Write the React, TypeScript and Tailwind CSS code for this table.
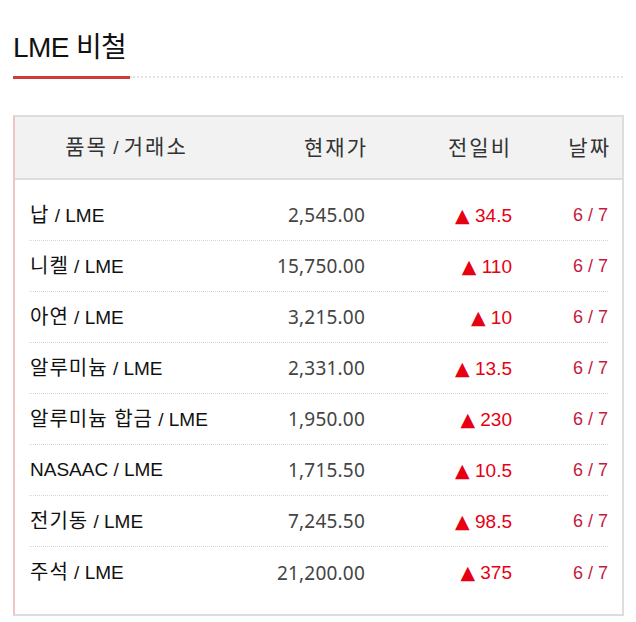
const rows = [
  { ko: "납", rest: " / LME", price: "2,545.00", diff: "34.5", date: "6 / 7" },
  { ko: "니켈", rest: " / LME", price: "15,750.00", diff: "110", date: "6 / 7" },
  { ko: "아연", rest: " / LME", price: "3,215.00", diff: "10", date: "6 / 7" },
  { ko: "알루미늄", rest: " / LME", price: "2,331.00", diff: "13.5", date: "6 / 7" },
  { ko: "알루미늄 합금", rest: " / LME", price: "1,950.00", diff: "230", date: "6 / 7" },
  { ko: "", rest: "NASAAC / LME", price: "1,715.50", diff: "10.5", date: "6 / 7" },
  { ko: "전기동", rest: " / LME", price: "7,245.50", diff: "98.5", date: "6 / 7" },
  { ko: "주석", rest: " / LME", price: "21,200.00", diff: "375", date: "6 / 7" },
];

const App = () => {
  return (
    <div className="w-[636px] h-[622px] bg-white font-['Liberation_Sans','Noto_Sans_CJK_KR',sans-serif] text-[#111] overflow-hidden">
      {/* title */}
      <div className="flex items-end mx-[13px] w-[610px] pt-[34px]">
        <h2 className="w-[117px] border-b-[3px] border-[#d03b3b] pb-[14px] text-[28px] leading-[28px] tracking-[-0.6px] whitespace-nowrap">
          LME 비철
        </h2>
        <div className="flex-1 border-b-2 border-dotted border-[#e2e2e2] mb-[1px]" />
      </div>

      {/* table */}
      <div className="mt-[36px] mx-[13px] w-[611px] h-[501px] border-2 border-[#dddddd] border-l-[#efc4c4] flex flex-col">
        <div className="h-[63px] bg-[#f2f2f2] border-b-2 border-[#dddddd] grid grid-cols-[212px_125px_146px_96px] items-center px-[14px] text-[21px] leading-[24px] tracking-[2px] text-[#333]">
          <div className="text-center pr-[17px] whitespace-nowrap">
            품목<span className="text-[19px] tracking-normal"> / </span>거래소
          </div>
          <div className="text-right -mr-[2px]">현재가</div>
          <div className="text-right">전일비</div>
          <div className="text-right -mr-[3px]">날짜</div>
        </div>
        <div className="pt-[10px] px-[14px]">
          {rows.map((r, i) => (
            <div
              key={i}
              className={
                "h-[51px] grid grid-cols-[212px_125px_146px_96px] items-center leading-[22px] " +
                (i < rows.length - 1 ? "border-b border-dotted border-[#d6d6d6]" : "")
              }
            >
              <div className="pl-[1px] text-[19px] whitespace-nowrap">
                {r.ko && <span className="text-[20px] tracking-[1px]">{r.ko}</span>}
                {r.rest}
              </div>
              <div className="text-right pr-[1px] text-[19px] text-[#444] font-['Noto_Sans',sans-serif] tracking-[0.2px]">
                {r.price}
              </div>
              <div className="text-right text-[19px] text-[#e60012] whitespace-nowrap">
                <span className="text-[19px] font-['DejaVu_Sans',sans-serif]">▲</span> {r.diff}
              </div>
              <div className="text-right text-[18px] text-[#c51a3e]">{r.date}</div>
            </div>
          ))}
        </div>
      </div>
    </div>
  );
};

export default App;
